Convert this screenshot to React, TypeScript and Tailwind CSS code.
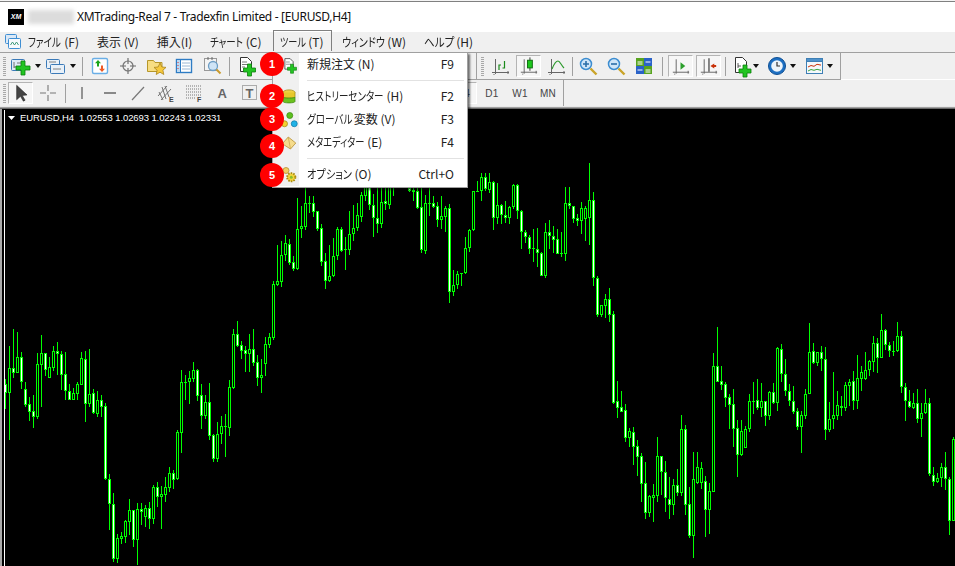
import React from "react";

type C = [number, number, number, number, number] | null;
// wick top, wick bottom, body top, body bottom, filled (1 = white core); values in 1/3 px relative to y=300
const D: C[] = [
[240,330,256,282,1],[141,423,208,281,0],[90,237,208,221,1],[99,222,175,221,0],[160,270,175,248,1],[250,323,271,317,1],[294,365,316,338,1],[288,386,337,353,1],
[162,360,196,353,0],[108,323,163,197,0],[162,232,163,212,1],[175,237,205,236,0],[141,216,157,206,0],[130,228,157,166,1],[157,274,166,227,1],[160,303,226,277,1],
[255,303,277,302,1],[268,303,283,302,0],[250,303,256,284,0],[160,258,178,257,0],[156,369,181,314,1],[150,323,286,314,0],[270,345,283,341,1],[277,355,304,344,0],
[289,353,304,323,1],[313,542,322,541,1],[526,692,541,616,1],[583,789,616,779,1],[705,792,718,779,0],[700,735,712,719,0],[664,732,667,713,0],[600,708,634,668,0],
[633,744,634,722,1],[612,800,631,722,0],[612,678,630,638,1],[618,684,628,653,0],[610,690,628,659,1],[558,675,565,659,0],[549,624,565,593,1],[561,690,586,593,0],
[534,608,565,587,0],[504,579,523,566,0],[513,570,523,542,1],[393,542,400,541,0],[213,462,250,401,0],[228,303,250,251,0],[216,315,238,250,0],[190,250,214,241,0],
[210,305,214,290,1],[255,390,289,350,1],[288,360,310,350,0],[252,422,310,410,1],[405,489,409,479,1],[369,489,406,479,0],[351,435,382,406,0],[345,474,382,384,0],
[243,411,265,386,0],[90,270,106,266,0],[66,144,106,141,1],[126,180,139,155,1],[142,219,154,164,1],[105,219,151,164,0],[90,200,151,191,1],[168,261,190,236,1],
[180,282,229,236,0],[114,231,136,194,0],[102,147,115,137,0],[-53,123,-44,117,0],[-162,-40,-53,-42,0],[-174,-37,-131,-52,0],[-192,-114,-167,-132,0],[-180,-102,-164,-108,1],
[-128,-84,-110,-90,1],[-303,-88,-209,-90,0],[-279,-183,-218,-210,0],[-333,-207,-288,-216,0],[-309,-258,-288,-286,0],[-309,-246,-287,-261,1],[-264,-204,-263,-210,1],
[-224,-100,-212,-110,1],[-138,-30,-113,-55,1],[-162,-50,-68,-55,0],[-182,-65,-128,-68,0],[-216,-117,-210,-130,0],[-216,-140,-210,-144,1],[-185,-88,-150,-148,0],
[-265,-132,-194,-148,0],[-282,-174,-212,-194,0],[-288,-205,-252,-212,0],[-320,-230,-312,-247,0],[-390,-295,-370,-310,0],[-360,-267,-360,-283,1],[-315,-187,-283,-242,1],
[-335,-198,-242,-225,1],[-335,-213,-290,-225,0],[-335,-268,-294,-284,1],[-340,-270,-335,-282,0],[-340,-308,-340,-340,0],null,null,null,
[-340,-320,-332,-324,1],[-340,-295,-327,-322,1],[-340,-270,-324,-273,1],[-340,-138,-275,-146,1],[-312,-135,-287,-145,0],[-332,-250,-287,-285,0],[-310,-272,-287,-276,1],
[-290,-215,-278,-238,1],[-310,-210,-248,-238,0],[-280,-200,-272,-246,0],[-285,12,-272,-22,1],[-88,-10,-42,-22,0],[-85,-30,-75,-42,0],[-75,-38,-77,-75,0],[-185,-75,-152,-77,0],
[-210,-140,-206,-152,0],[-325,-204,-325,-206,0],[-355,-320,-325,-323,0],[-378,-295,-365,-323,0],[-378,-325,-365,-329,1],[-378,-318,-350,-328,0],[-355,-208,-350,-242,1],
[-348,-225,-282,-242,0],[-285,-225,-282,-251,1],[-295,-228,-251,-244,1],[-278,-225,-275,-244,0],[-345,-270,-342,-275,0],[-345,-240,-342,-263,1],[-266,-150,-263,-200,1],
[-208,-168,-200,-185,1],[-192,-135,-185,-151,1],[-210,-110,-152,-150,0],[-212,-95,-149,-139,1],[-140,-68,-139,-70,1],[-228,-62,-200,-70,0],[-238,-150,-200,-190,1],
[-218,-138,-190,-178,1],[-210,-135,-180,-136,1],[-200,-125,-138,-136,0],[-335,-115,-287,-136,0],[-335,-270,-287,-278,1],[-278,-228,-278,-240,1],[-255,-220,-242,-233,1],
[-290,-195,-272,-233,0],[-280,-175,-272,-240,0],[-408,-162,-296,-242,0],[-320,-40,-296,-62,1],[-68,55,-62,47,1],[18,55,18,47,0],[-15,58,0,20,0],[-32,68,0,47,1],
[36,315,46,311,1],[247,357,307,326,1],[277,338,325,338,1],[316,430,334,416,1],[388,444,397,416,0],[385,498,400,443,1],[423,530,442,473,1],[462,608,472,554,1],
[490,660,553,641,1],[588,654,591,641,0],[556,668,589,596,0],[415,608,472,590,0],[470,588,472,518,1],[487,638,520,598,1],[535,660,599,617,1],[541,648,559,617,0],
[510,590,559,581,1],[348,592,391,581,0],[379,648,391,617,1],[565,717,616,710,1],[460,776,541,710,0],[460,555,505,551,0],[490,570,508,551,0],[532,714,547,632,1],
[553,705,577,632,0],[162,578,202,578,0],[84,248,202,248,1],[202,272,247,257,1],[250,324,256,296,1],[285,390,295,317,1],[270,445,316,389,1],[362,534,388,467,1],
[363,470,397,467,0],[380,445,391,446,0],[285,398,307,391,0],[249,345,305,308,1],[240,333,304,326,1],[252,354,307,326,0],[307,380,307,350,1],[277,362,280,350,0],
[252,315,280,311,1],[145,336,148,311,0],[136,248,149,226,1],[180,290,226,275,1],[255,320,275,305,1],[262,344,307,338,1],[328,392,337,383,1],[335,462,349,383,0],
[270,360,286,350,0],[72,286,160,284,0],[132,195,157,191,1],[160,200,160,191,0],[142,215,160,181,1],[144,422,181,392,1],[309,400,361,392,0],[220,390,349,361,0],
[277,362,319,350,0],[292,350,322,326,1],[250,335,259,326,0],[240,320,248,260,0],[216,332,247,307,1],[168,330,238,307,0],[202,275,220,240,0],[160,242,214,241,0],
[182,232,187,214,0],[112,218,133,188,0],[118,222,133,178,1],[45,178,94,178,0],[90,152,94,139,1],[130,173,139,157,1],[125,172,157,159,0],[69,158,112,157,0],
[97,281,112,265,1],[253,366,265,307,1],[273,328,307,325,1],[282,331,313,328,0],[270,372,313,361,1],[313,414,343,361,0],[270,345,313,343,0],[297,530,313,526,1],
[505,560,529,548,1],[522,553,538,548,0],[492,565,505,538,0],[460,572,505,541,1],[535,707,541,665,1],[415,665,421,665,0],
];

const Y = (z: number) => Math.round(300 + z / 3);

function Candles() {
  return (
    <svg className="absolute left-0 top-0" width={955} height={456} viewBox="0 110 955 456" shapeRendering="crispEdges">
      {D.map((c, i) => {
        if (!c) return null;
        const x = 5 + 4 * i;
        const [wt, wb, bt, bb, f] = c;
        const t = Y(bt);
        const h = Math.max(Y(bb) - t, 1);
        return (
          <g key={i}>
            <rect x={x} y={Y(wt)} width={1} height={Math.max(Y(wb) - Y(wt), 1)} fill="#00ff00" />
            {h <= 2 ? (
              <rect x={x - 1} y={t} width={3} height={Math.max(h, 1)} fill="#00ff00" />
            ) : (
              <>
                <rect x={x - 1} y={t} width={3} height={h} fill="#00ff00" />
                <rect x={x} y={t + 1} width={1} height={h - 2} fill={f ? "#ffffff" : "#000000"} />
              </>
            )}
          </g>
        );
      })}
    </svg>
  );
}

const Ico = ({ children, size = 24 }: { children: React.ReactNode; size?: number }) => (
  <svg width={size} height={size} viewBox="0 0 24 24" fill="none" className="block">
    {children}
  </svg>
);

const Plus = ({ x, y, a = 6, w = 2 }: { x: number; y: number; a?: number; w?: number }) => (
  <path
    d={`M${x - w} ${y - a}h${2 * w}v${a - w}h${a - w}v${2 * w}h${w - a}v${a - w}h${-2 * w}v${w - a}h${w - a}v${-2 * w}h${a - w}z`}
    fill="#22c422"
    stroke="#0b7d0b"
    strokeWidth="0.8"
  />
);

const Arrow = () => (
  <svg width={6} height={4} viewBox="0 0 6 4" className="block">
    <path d="M0 0h6L3 4z" fill="#111" />
  </svg>
);

const Axes = () => (
  <path d="M7.5 5v15M4 18.5h17M5.5 20.5h1M20 17v3" stroke="#666" strokeWidth="1" />
);

const Doc = () => (
  <path d="M6.5 3.5h7l4 4v10h-11z" fill="#fff" stroke="#333" strokeWidth="1" />
);

const IconNewChart = () => (
  <Ico>
    <rect x="3.5" y="5.5" width="13" height="11" rx="1" fill="#dfeaf6" stroke="#3b7ab8" />
    <path d="M6 8v6M6 13h8M9 9h4" stroke="#555" strokeWidth="0.8" />
    <Plus x={15} y={14} a={7} w={2} />
  </Ico>
);
const IconProfiles = () => (
  <Ico>
    <rect x="3.5" y="5.5" width="13" height="9" rx="1" fill="#e8f0f8" stroke="#3b7ab8" />
    <rect x="7.5" y="10.5" width="14" height="9" rx="1" fill="#e8f0f8" stroke="#3b7ab8" />
    <path d="M6 8h7M10 15h8" stroke="#666" strokeWidth="0.8" />
  </Ico>
);
const IconMarket = () => (
  <Ico>
    <rect x="4.5" y="4.5" width="15" height="15" rx="1.5" fill="#fff" stroke="#6aaee6" strokeWidth="1.4" />
    <path d="M10 6l3 3.2h-2v3.4H9V9.2H7z" fill="#1aa51a" />
    <path d="M14 18l-3-3.2h2v-3.4h2v3.4h2z" fill="#ee5a24" />
  </Ico>
);
const IconCross = () => (
  <Ico>
    <circle cx="12" cy="12" r="5" stroke="#777" strokeWidth="1.2" />
    <path d="M12 4v6M12 14v6M4 12h6M14 12h6" stroke="#666" strokeWidth="1.1" />
  </Ico>
);
const IconFolder = () => (
  <Ico>
    <path d="M3.5 6.5h6l1.500 2h7v9h-14.500z" fill="#f7dd82" stroke="#b6972a" />
    <path d="M16 9l1.900 4 4.100.4-3.100 2.800.9 4.300-3.800-2.300-3.800 2.300.9-4.300-3.100-2.800 4.100-.4z" fill="#f6c93e" stroke="#a9841a" strokeWidth="0.8" />
  </Ico>
);
const IconTerminal = () => (
  <Ico>
    <rect x="4.500" y="5.500" width="15" height="13" fill="#fff" stroke="#2e7cc4" strokeWidth="1.400" />
    <rect x="4.500" y="5.500" width="4" height="13" fill="#bcd9f2" stroke="#2e7cc4" strokeWidth="1" />
    <path d="M10 9h8M10 12h8M10 15h8" stroke="#9ab7d4" />
    <path d="M6 8v1M6 11v1M6 14v1" stroke="#d33" />
  </Ico>
);
const IconTester = () => (
  <Ico>
    <rect x="4.500" y="4.500" width="12" height="12" fill="#f4f4f4" stroke="#999" />
    <circle cx="13" cy="12" r="4.500" fill="#cfe4f6" stroke="#6d9dc4" strokeWidth="1.300" />
    <path d="M16.500 15.500l4 4" stroke="#c99a2c" strokeWidth="2" />
    <path d="M8 3v3M12 3v3" stroke="#666" />
  </Ico>
);
const IconNewOrder = () => (
  <Ico>
    <Doc />
    <path d="M8 8h5M8 10.500h7M8 13h3" stroke="#555" strokeWidth="0.8" />
    <Plus x={15.500} y={16} a={6} w={2} />
  </Ico>
);
const IconAuto = () => (
  <Ico>
    <path d="M6 6h7M6 9h7M6 12h7M6 15h7" stroke="#333" strokeWidth="1.300" />
  </Ico>
);
const IconBars = () => (
  <Ico>
    <Axes />
    <path d="M11 16V11h2M14.500 14h2V7" stroke="#1a8a1a" strokeWidth="1.200" />
  </Ico>
);
const IconCandle = () => (
  <Ico>
    <Axes />
    <path d="M13.500 3v14" stroke="#333" />
    <rect x="11" y="6" width="5" height="8" fill="#1ec81e" stroke="#0d6d0d" />
  </Ico>
);
const IconLine = () => (
  <Ico>
    <Axes />
    <path d="M8 15c2-5 4-8 6-8s3 4 6 7" stroke="#2d9a2d" strokeWidth="1.200" />
  </Ico>
);
const IconZoom = ({ plus }: { plus?: boolean }) => (
  <Ico>
    <circle cx="10" cy="10" r="5.500" fill="#cfe5f8" stroke="#3c8dd0" strokeWidth="1.500" />
    <path d={plus ? "M7 10h6M10 7v6" : "M7 10h6"} stroke="#2a6ea8" strokeWidth="1.600" />
    <path d="M14.500 14.500l6 6" stroke="#caa42a" strokeWidth="2.400" />
  </Ico>
);
const IconTile = () => (
  <Ico>
    <rect x="4" y="4" width="8" height="8" fill="#58a41f" />
    <rect x="12" y="4" width="8" height="8" fill="#2a62c8" />
    <rect x="4" y="12" width="8" height="8" fill="#2a62c8" />
    <rect x="12" y="12" width="8" height="8" fill="#58a41f" />
    <path d="M5.500 8h5M5.500 10h5M13.500 8h5M5.500 16h5M13.500 16h5M13.500 18h5" stroke="#fff" />
  </Ico>
);
const IconShift = () => (
  <Ico>
    <Axes />
    <path d="M12 8v8l5-4z" fill="#2ca02c" />
  </Ico>
);
const IconAuto2 = () => (
  <Ico>
    <Axes />
    <path d="M12.500 4v14" stroke="#333" strokeWidth="1.200" />
    <path d="M14 12l4-2.500v1.500h2v2h-2v1.500z" fill="#c8320a" />
  </Ico>
);
const IconIndicator = () => (
  <Ico>
    <path d="M6.500 3.500h7l4 4v11h-11z" fill="#fff" stroke="#333" />
    <path d="M9 9v5M9 12h3" stroke="#333" strokeWidth="0.8" />
    <Plus x={16} y={17} a={6} w={2} />
  </Ico>
);
const IconClock = () => (
  <Ico>
    <circle cx="12" cy="12" r="8.500" fill="#1d6fc2" stroke="#0e4f94" />
    <circle cx="12" cy="12" r="5.800" fill="#eef5fb" />
    <path d="M12 8v4h3" stroke="#333" strokeWidth="1.200" />
  </Ico>
);
const IconTemplate = () => (
  <Ico>
    <rect x="3.500" y="4.500" width="16" height="15" fill="#f4f8fb" stroke="#3e7fb5" />
    <rect x="3.500" y="4.500" width="16" height="3" fill="#4f92cb" stroke="#3e7fb5" />
    <path d="M5 13l3-1.500 3 .8 3-2 4 .8" stroke="#c8320a" />
    <path d="M5 17l3-1.500 3 .8 3-1 4 1" stroke="#3aa33a" />
  </Ico>
);
const IconCursor = () => (
  <Ico>
    <path d="M8 4v15l4-3.500 3 5 1.800-1-3-5 5-.5z" fill="#444" stroke="#222" strokeWidth="0.6" />
  </Ico>
);
const IconCrosshair = () => (
  <Ico>
    <path d="M12 4v6M12 14v6M4 12h6M14 12h6" stroke="#777" strokeWidth="1.100" />
  </Ico>
);
const IconV = () => (
  <Ico>
    <path d="M12 6v12" stroke="#555" strokeWidth="1.200" />
  </Ico>
);
const IconH = () => (
  <Ico>
    <path d="M6 12h12" stroke="#444" strokeWidth="1.200" />
  </Ico>
);
const IconTrend = () => (
  <Ico>
    <path d="M6 19L18 6" stroke="#777" strokeWidth="1.200" />
  </Ico>
);
const IconChannel = () => (
  <Ico>
    <path d="M4 15L13 5M7 19L17 8M8 6l4 12M11 5l4 11M5 11l4 8" stroke="#666" strokeWidth="0.9" />
    <text x="15" y="21" fontSize="7" fontWeight="700" fill="#444" fontFamily="Liberation Sans">E</text>
  </Ico>
);
const IconFibo = () => (
  <Ico>
    <path d="M4 5h15M4 8h15M4 11h15M4 14h15M4 17h9" stroke="#777" strokeDasharray="1 1" />
    <text x="15" y="21" fontSize="7" fontWeight="700" fill="#444" fontFamily="Liberation Sans">F</text>
  </Ico>
);
const IconA = () => (
  <Ico>
    <text x="7.500" y="17" fontSize="13" fontWeight="700" fill="#666" fontFamily="Liberation Sans">A</text>
  </Ico>
);
const IconT = () => (
  <Ico>
    <rect x="4.500" y="4.500" width="14" height="14" stroke="#666" strokeDasharray="1 1" />
    <text x="7.500" y="16.500" fontSize="13" fontWeight="700" fill="#666" fontFamily="Liberation Sans">T</text>
  </Ico>
);

const Cell = ({ w, children }: { w: string; children?: React.ReactNode }) => (
  <div className={`flex items-center justify-center h-full shrink-0 ${w}`}>{children}</div>
);
const Tool = ({ children }: { children?: React.ReactNode }) => (
  <div className="flex items-center justify-center h-full shrink-0 w-[28px]">{children}</div>
);
const Active = ({ children, cls = "w-[25px]" }: { children?: React.ReactNode; cls?: string }) => (
  <div className={`flex items-center justify-center shrink-0 h-[22px] ${cls} border border-t-[#b4b4b4] border-l-[#b4b4b4] border-r-white border-b-white bg-[#f6f6f6]`}>
    {children}
  </div>
);
const Sep = ({ w }: { w: string }) => (
  <div className={`flex items-center justify-center h-full shrink-0 ${w}`}>
    <div className="w-px h-[19px] bg-[#a0a0a0]" />
  </div>
);
const Grip = () => (
  <div className="flex items-center justify-center h-full shrink-0 w-[8px]">
    <div className="w-[3px] h-[19px] bg-[repeating-linear-gradient(to_bottom,#a8a8a8_0,#a8a8a8_1px,transparent_1px,transparent_2px)]" />
  </div>
);
const TF = ({ children }: { children: React.ReactNode }) => (
  <div className="flex items-center justify-center h-full shrink-0 w-[28px] text-[10px] tracking-[0.3px] text-[#444] font-['Liberation_Sans',sans-serif]">
    {children}
  </div>
);

// Katakana in the reference font is much narrower than in the installed CJK font
const Kana = ({ cls, children }: { cls: string; children: React.ReactNode }) => (
  <span className={`inline-block origin-left ${cls}`}>{children}</span>
);

const MenuRow = ({ icon, label, keyName }: { icon: React.ReactNode; label: React.ReactNode; keyName: string }) => (
  <div className="flex items-center h-[23px]">
    <div className="flex items-center justify-center w-[26px] h-full bg-[#f0f0f0] pl-[6px] shrink-0">{icon}</div>
    <div className="pl-[8px] pb-[2px] flex-1 whitespace-nowrap">{label}</div>
    <div className="pr-[13px] pb-[2px] whitespace-nowrap">{keyName}</div>
  </div>
);
const MenuSep = () => (
  <div className="flex h-[9px]">
    <div className="w-[26px] h-full bg-[#f0f0f0] shrink-0" />
    <div className="flex-1 flex items-center pl-[8px] pr-[3px]">
      <div className="h-px w-full bg-[#e2e2e2]" />
    </div>
  </div>
);

const Badge = ({ n, cls }: { n: number; cls: string }) => (
  <div className={`absolute left-[260px] w-[24px] h-[24px] rounded-full bg-[#ff0000] text-white flex items-center justify-center text-[11px] font-bold font-['Liberation_Sans',sans-serif] ${cls}`}>
    {n}
  </div>
);

export default function App() {
  return (
    <div className="relative w-[955px] h-[566px] overflow-hidden bg-white flex flex-col text-[12px] text-[#222] font-['Noto_Sans_CJK_JP','Noto_Sans',sans-serif] [font-feature-settings:'palt']">
      <div className="h-[1px] bg-[#f4f4f4]" />
      <div className="h-[1px] bg-[#808080]" />
      {/* title bar */}
      <div className="h-[30px] flex items-center bg-white pl-[8px]">
        <div className="w-[16px] h-[16px] bg-black text-white text-[7px] italic font-bold flex items-center justify-center font-['Liberation_Sans',sans-serif]">XM</div>
        <div className="w-[46px] h-[14px] ml-[4px] bg-[#dcdcdc] blur-[2px]" />
        <div className="ml-[3px] text-[12px] tracking-[-0.32px] text-[#111] whitespace-nowrap font-['Noto_Sans',sans-serif]">XMTrading-Real 7 - Tradexfin Limited - [EURUSD,H4]</div>
      </div>
      {/* menu bar */}
      <div className="h-[20px] bg-[#f0f0f0] flex items-center">
        <div className="w-[28px] pl-[5px] shrink-0">
          <svg width={16} height={16} viewBox="0 0 16 16" fill="none" className="block">
            <rect x="0.500" y="0.500" width="11" height="9" rx="1" fill="#dbe9f7" stroke="#3f8ed2" />
            <rect x="3.500" y="4.500" width="12" height="10" rx="1" fill="#f5f9fd" stroke="#3f8ed2" />
            <path d="M5.500 11l2-3 2 3 2-3 2 3" stroke="#3f9b7a" />
          </svg>
        </div>
        <div className="flex items-center gap-[18px] whitespace-nowrap">
          <div><Kana cls="scale-x-[.79] mr-[-8px]">ファイル</Kana> (F)</div>
          <div>表示 (V)</div>
          <div>挿入(I)</div>
          <div><Kana cls="scale-x-[.79] mr-[-9px]">チャート</Kana> (C)</div>
          <div className="relative">
            <div className="absolute left-[-7px] right-[-8px] top-[-3px] h-[21px] border border-b-0 border-[#808080]" />
            <Kana cls="scale-x-[.76] mr-[-8px]">ツール</Kana> (T)
          </div>
          <div><Kana cls="scale-x-[.84] mr-[-8px]">ウィンドウ</Kana> (W)</div>
          <div><Kana cls="scale-x-[.88] mr-[-5px]">ヘルプ</Kana> (H)</div>
        </div>
      </div>
      {/* toolbar row 1 */}
      <div className="h-[1px] bg-[#a0a0a0]" />
      <div className="h-[26px] flex items-center bg-[#f0f0f0]">
        <div className="flex items-center h-full w-[841px] border-r border-[#a0a0a0]">
          <Grip />
          <Cell w="w-[24px]"><IconNewChart /></Cell>
          <Cell w="w-[11px]"><Arrow /></Cell>
          <Cell w="w-[24px]"><IconProfiles /></Cell>
          <Cell w="w-[12px]"><Arrow /></Cell>
          <Sep w="w-[7px]" />
          <Tool><IconMarket /></Tool>
          <Tool><IconCross /></Tool>
          <Tool><IconFolder /></Tool>
          <Tool><IconTerminal /></Tool>
          <Tool><IconTester /></Tool>
          <Sep w="w-[7px]" />
          <Cell w="w-[25px]"><IconNewOrder /></Cell>
          <Cell w="w-[16px]"><IconAuto /></Cell>
          <Cell w="w-[202px]" />
          <div className="w-px h-full bg-[#a0a0a0] shrink-0" />
          <Cell w="w-[1px]" />
          <Grip />
          <Tool><IconBars /></Tool>
          <Tool><Active><IconCandle /></Active></Tool>
          <Tool><IconLine /></Tool>
          <Sep w="w-[4px]" />
          <Tool><IconZoom plus /></Tool>
          <Tool><IconZoom /></Tool>
          <Tool><IconTile /></Tool>
          <Sep w="w-[8px]" />
          <Tool><Active><IconShift /></Active></Tool>
          <Tool><Active><IconAuto2 /></Active></Tool>
          <Sep w="w-[6px]" />
          <Cell w="w-[25px]"><IconIndicator /></Cell>
          <Cell w="w-[6px]"><Arrow /></Cell>
          <Cell w="w-[5px]" />
          <Cell w="w-[26px]"><IconClock /></Cell>
          <Cell w="w-[6px]"><Arrow /></Cell>
          <Cell w="w-[7px]" />
          <Cell w="w-[24px]"><IconTemplate /></Cell>
          <Cell w="w-[6px]"><Arrow /></Cell>
        </div>
      </div>
      <div className="h-[1px] w-[841px] bg-[#a0a0a0]" />
      {/* toolbar row 2 */}
      <div className="h-[26px] flex items-center bg-[#f0f0f0]">
        <div className="flex items-center h-full w-[564px] border-r border-[#a0a0a0]">
          <Grip />
          <Active><IconCursor /></Active>
          <Cell w="w-[1px]" />
          <Tool><IconCrosshair /></Tool>
          <Sep w="w-[6px]" />
          <Tool><IconV /></Tool>
          <Tool><IconH /></Tool>
          <Tool><IconTrend /></Tool>
          <Tool><IconChannel /></Tool>
          <Tool><IconFibo /></Tool>
          <Tool><IconA /></Tool>
          <Tool><IconT /></Tool>
          <Cell w="w-[186px]" />
          <Active cls="w-[27px]"><span className="text-[10px] text-[#444] font-['Liberation_Sans',sans-serif]">H4</span></Active>
          <Cell w="w-[1px]" />
          <TF>D1</TF>
          <TF>W1</TF>
          <TF>MN</TF>
        </div>
      </div>
      <div className="h-[1px] bg-[#e8e8e8]" />
      <div className="h-[1px] bg-[#a0a0a0]" />
      <div className="h-[1px] bg-[#696969]" />
      {/* chart */}
      <div className="relative flex-1 bg-black">
        <Candles />
        <div className="absolute left-0 top-0 bottom-0 w-[2px] bg-[#a8a8a8]" />
        <div className="absolute left-[4px] top-[1px] bottom-0 w-px bg-white" />
        <div className="absolute left-[8px] top-[2px] flex items-center gap-[5px] whitespace-nowrap text-white text-[9.5px] tracking-[-0.1px] leading-[14px] font-['Liberation_Sans',sans-serif]">
          <svg width={7} height={4} viewBox="0 0 7 4" className="block"><path d="M0 0h7L3.500 4z" fill="#fff" /></svg>
          <span>EURUSD,H4&nbsp;&nbsp;1.02553 1.02693 1.02243 1.02331</span>
        </div>
      </div>
      {/* dropdown */}
      <div className="absolute left-[272px] top-[52px] w-[196px] h-[136px] bg-white border border-[#a0a0a0] shadow-[2px_2px_2px_rgba(0,0,0,0.55)] flex flex-col text-[12px] text-[#222]">
        <MenuRow label="新規注文 (N)" keyName="F9" icon={
          <Ico size={18}><Doc /><path d="M8 8h5M8 11h7" stroke="#555" strokeWidth="0.8" /><Plus x={16} y={17} a={6} w={2} /></Ico>
        } />
        <MenuSep />
        <MenuRow label={<><Kana cls="scale-x-[.79] mr-[-20px]">ヒストリーセンター</Kana> (H)</>} keyName="F2" icon={
          <Ico size={18}>
            <ellipse cx="12" cy="6" rx="8" ry="3.500" fill="#f0d040" stroke="#a08a10" />
            <path d="M4 6v6c0 2 16 2 16 0V6" fill="#e6c82c" stroke="#a08a10" />
            <path d="M4 12v6c0 2.500 16 2.500 16 0v-6c0 2-16 2-16 0z" fill="#6cc21e" stroke="#3f8a10" />
          </Ico>
        } />
        <MenuRow label={<><Kana cls="scale-x-[.8] mr-[-10px]">グローバル</Kana>変数 (V)</>} keyName="F3" icon={
          <Ico size={18}>
            <circle cx="13" cy="6" r="4" fill="#5cc01e" stroke="#3f8a10" />
            <circle cx="6" cy="17" r="4" fill="#f2cf30" stroke="#a08a10" />
            <circle cx="19" cy="17" r="4" fill="#1fb2e6" stroke="#0f7aa8" />
          </Ico>
        } />
        <MenuRow label={<><Kana cls="scale-x-[.77] mr-[-17px]">メタエディター</Kana> (E)</>} keyName="F4" icon={
          <Ico size={18}>
            <path d="M3 13L11 4l10 8-7 8z" fill="#f6dc8c" stroke="#b08a2c" />
            <path d="M11 4l3 16" stroke="#c9a34a" strokeWidth="1" />
          </Ico>
        } />
        <MenuSep />
        <MenuRow label={<><Kana cls="scale-x-[.85] mr-[-8px]">オプション</Kana> (O)</>} keyName="Ctrl+O" icon={
          <Ico size={18}>
            <circle cx="8" cy="6" r="4" fill="#f2cf60" stroke="#b08a2c" />
            <circle cx="15" cy="15" r="5.500" fill="#f3d43c" stroke="#a88a10" strokeWidth="2.500" strokeDasharray="2 1.500" />
            <circle cx="15" cy="15" r="2" fill="#8bbf2c" />
          </Ico>
        } />
      </div>
      {/* numbered badges */}
      <Badge n={1} cls="top-[52px]" />
      <Badge n={2} cls="top-[84px]" />
      <Badge n={3} cls="top-[107px]" />
      <Badge n={4} cls="top-[134px]" />
      <Badge n={5} cls="top-[163px]" />
    </div>
  );
}
